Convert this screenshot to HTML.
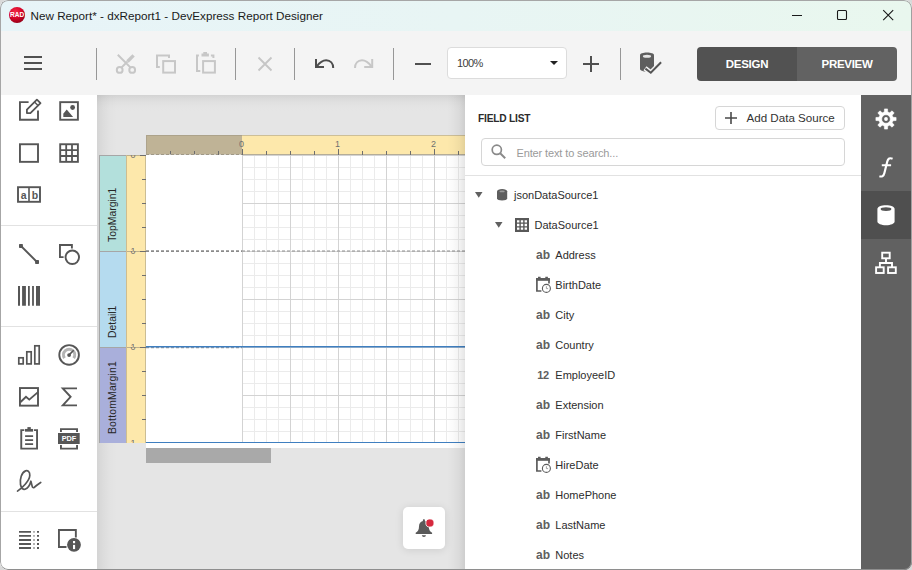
<!DOCTYPE html>
<html><head><meta charset="utf-8"><title>DevExpress Report Designer</title>
<style>
*{box-sizing:border-box;margin:0;padding:0}
html,body{width:912px;height:570px;overflow:hidden;background:#d9d9d9;font-family:"Liberation Sans",sans-serif;}
.abs{position:absolute}
#win{position:absolute;left:0;top:0;width:912px;height:570px;overflow:hidden;background:#f3f3f3;border-radius:8px 8px 8px 8px;}
#titlebar{position:absolute;left:0;top:0;width:912px;height:31px;background:linear-gradient(90deg,#e7f4f8 0%,#e8f5f4 50%,#e9f7ee 100%);}
#title{position:absolute;left:30.5px;top:8px;font-size:11.7px;line-height:16px;color:#1a1a1a;white-space:nowrap;}
#toolbar{position:absolute;left:0;top:31px;width:912px;height:64px;background:#f4f4f4;}
.vsep{position:absolute;top:48px;width:1px;height:32px;background:#979797;}
#toolbox{position:absolute;left:0;top:95px;width:97px;height:475px;background:#fff;}
.hsep{position:absolute;left:0;width:97px;height:1px;background:#e2e2e2;}
#surface{position:absolute;left:97px;top:95px;width:368px;height:475px;background:#e5e5e5;overflow:hidden;}
#panel{position:absolute;left:465px;top:95px;width:396px;height:475px;background:#fff;}
#strip{position:absolute;left:861px;top:95px;width:51px;height:475px;background:#616161;}
.row{position:absolute;font-size:11px;line-height:14px;color:#2d2d2d;white-space:nowrap;}
.ab{position:absolute;font-size:12px;line-height:14px;font-weight:bold;color:#606060;white-space:nowrap;letter-spacing:0}
svg{position:absolute;overflow:visible}
.rn{font-size:9px;line-height:12px;color:#707070;text-align:center}
.bl{height:28px;transform-origin:0 0;transform:rotate(-90deg);font-size:10.4px;line-height:27px;color:#262626;white-space:nowrap;letter-spacing:0}
</style></head><body>
<div id="win">
<div id="titlebar">
  <svg style="left:9px;top:7px" width="16" height="16" viewBox="0 0 16 16"><defs><radialGradient id="rg" cx="40%" cy="30%" r="75%"><stop offset="0" stop-color="#f22a48"/><stop offset="0.55" stop-color="#d60428"/><stop offset="1" stop-color="#8e0016"/></radialGradient></defs><circle cx="8" cy="8" r="8" fill="url(#rg)"/><text x="8.1" y="10.3" font-size="6.5" font-weight="bold" fill="#fff" text-anchor="middle" font-family="Liberation Sans, sans-serif">RAD</text></svg>
  <div id="title">New Report* - dxReport1 - DevExpress Report Designer</div>
  <svg style="left:786px;top:5px" width="120" height="20" viewBox="0 0 120 20" fill="none" stroke="#1a1a1a" stroke-width="1.1"><path d="M6 10.5h10"/><rect x="51.5" y="5.5" width="9" height="9" rx="1"/><path d="M97.2 5.2l10 10M107.2 5.2l-10 10"/></svg>
</div>
<div id="toolbar">
  <svg style="left:24px;top:25px" width="18" height="14" viewBox="0 0 18 14"><path d="M0 1.5h18M0 7.5h18M0 13.5h18" stroke="#505050" stroke-width="2" transform="translate(0,-0.5)"/></svg>
  <div class="vsep" style="left:96px;top:17px"></div>
  <!-- cut copy paste -->
  <svg style="left:0;top:0" width="240" height="64" viewBox="0 31 240 64" fill="none" stroke="#c7c7c7" stroke-width="2">
    <circle cx="119.7" cy="69.9" r="2.9"/><circle cx="132.2" cy="69.9" r="2.9"/>
    <path d="M117.8 54.8L130.6 67.6M121.4 67.6L127.5 61.5"/>
    <path d="M133.6 55.3L127.5 61.5" stroke-width="3.3"/>
    <path d="M159.8 66.9H157V55.4H169V57.9"/><rect x="163.2" y="61.1" width="11.8" height="11.5"/>
    <path d="M200.3 71.1H197V55.4H198.9M210.9 55.4H213.4V58.1"/><rect x="203.1" y="61.1" width="11.8" height="11.5"/>
    <path d="M201.5 53.6h7.4v2.8h-7.4zM203.3 51.9h3.7v2h-3.7z" fill="#c7c7c7" stroke="none"/>
  </svg>
  <div class="vsep" style="left:235px;top:17px"></div>
  <svg style="left:258px;top:26px" width="14" height="14" viewBox="0 0 14 14" fill="none" stroke="#c6c6c6" stroke-width="1.8"><path d="M0.5 0.5l13 13M13.5 0.5l-13 13"/></svg>
  <div class="vsep" style="left:294px;top:17px"></div>
  <!-- undo redo -->
  <svg style="left:0;top:0" width="1" height="1" viewBox="0 31 1 1" fill="none" stroke-width="2"><g stroke="#4e4e4e"><path d="M316 59V67H324"/><path d="M316.8 66.3C320 61.8 323 60.2 326.2 60.2C330.4 60.2 333.2 63.5 333.2 68"/></g><g stroke="#c7c7c7" transform="translate(688.2,0) scale(-1,1)"><path d="M316 59V67H324"/><path d="M316.8 66.3C320 61.8 323 60.2 326.2 60.2C330.4 60.2 333.2 63.5 333.2 68"/></g></svg>
  <div class="vsep" style="left:393px;top:17px"></div>
  <div class="abs" style="left:415px;top:31.5px;width:16px;height:2px;background:#505050"></div>
  <div class="abs" style="left:447px;top:16px;width:120px;height:32px;background:#fff;border:1px solid #dcdcdc;border-radius:4px"></div>
  <div class="abs" style="left:457px;top:25px;font-size:11px;line-height:14px;color:#404040;letter-spacing:-0.6px">100%</div>
  <svg style="left:549.5px;top:30px" width="8" height="4" viewBox="0 0 8 4"><path d="M0 0h8l-4 4z" fill="#222"/></svg>
  <svg style="left:583px;top:25px" width="16" height="16" viewBox="0 0 16 16" stroke="#505050" stroke-width="2"><path d="M0 8h16M8 0v16"/></svg>
  <div class="vsep" style="left:620px;top:17px"></div>
  <!-- validate datasource -->
  <svg style="left:0;top:0" width="1" height="1" viewBox="0 31 1 1"><path d="M640 55.2C640 53.7 643.1 52.6 647 52.6s7 1.1 7 2.6v13.8c0 1.5-3.1 2.6-7 2.6s-7-1.1-7-2.6z" fill="#5e5e5e"/><ellipse cx="647" cy="56.3" rx="4.1" ry="1.5" fill="#e6e6e6"/><path d="M645 68.3l5.8 4.4 10.4-10.5" fill="none" stroke="#f4f4f4" stroke-width="5"/><path d="M645.4 68.6l5.4 4.1 10.3-10.4" fill="none" stroke="#555" stroke-width="2"/></svg>
  <div class="abs" style="left:697px;top:16px;width:100px;height:34px;background:#525252;border-radius:4px 0 0 4px"></div>
  <div class="abs" style="left:797px;top:16px;width:100px;height:34px;background:#626262;border-radius:0 4px 4px 0"></div>
  <div class="abs" style="left:697px;top:26px;width:100px;text-align:center;font-size:11.5px;line-height:14px;font-weight:bold;color:#fff;letter-spacing:-0.3px">DESIGN</div>
  <div class="abs" style="left:797px;top:26px;width:100px;text-align:center;font-size:11.5px;line-height:14px;font-weight:bold;color:#fff;letter-spacing:-0.3px">PREVIEW</div>
</div>
<div id="toolbox">
<div class="hsep" style="top:130px"></div>
<div class="hsep" style="top:231px"></div>
<div class="hsep" style="top:416px"></div>
<svg style="left:0;top:0" width="97" height="475" viewBox="0 95 97 475" fill="none" stroke="#565656" stroke-width="1.9">
  <!-- label / edit -->
  <path d="M28.6 102.1H19.95V119.75H38V110.6"/>
  <path d="M26.9 113.1V109.6L36.9 99.6 40.5 103.2 30.4 113.1Z" stroke-width="1.8" stroke-linejoin="round"/>
  <path d="M34.5 102.1L38 105.6" stroke-width="1.4"/>
  <!-- picture -->
  <rect x="60.2" y="102.15" width="17.7" height="17.6"/>
  <path d="M63.3 116.9v-3.2l3.4-4.3 6.4 7.5z" fill="#565656" stroke="none"/>
  <circle cx="72.6" cy="107.5" r="2.4" fill="#565656" stroke="none"/>
  <!-- panel -->
  <rect x="19.95" y="144.25" width="18.05" height="17.6"/>
  <!-- table -->
  <rect x="60.2" y="144.25" width="17.7" height="17.6"/>
  <path d="M66.2 144v18M72 144v18M60 150.1h18M60 156h18" stroke-width="1.8"/>
  <!-- character comb -->
  <rect x="18" y="187.2" width="22" height="14.6"/>
  <path d="M29 187v15" stroke-width="1.6"/>
  <text x="23.6" y="198.6" font-size="10.5" font-weight="bold" fill="#565656" stroke="none" text-anchor="middle" font-family="Liberation Sans, sans-serif">a</text>
  <text x="34.9" y="198.6" font-size="10.5" font-weight="bold" fill="#565656" stroke="none" text-anchor="middle" font-family="Liberation Sans, sans-serif">b</text>
  <!-- line -->
  <path d="M21 246l16 16"/>
  <rect x="19" y="244" width="3.9" height="3.9" rx="0.7" fill="#565656" stroke="none"/>
  <rect x="35.1" y="260.1" width="3.9" height="3.9" rx="0.7" fill="#565656" stroke="none"/>
  <!-- shape -->
  <path d="M63.6 257.1H59.95V244.95H71.9V248.6"/>
  <circle cx="72.3" cy="257.3" r="6.75"/>
  <!-- barcode -->
  <path d="M18 286h2v19.8h-2zM22.1 286h3.8v19.8h-3.8zM28 286h1.8v19.8h-1.8zM32.1 286h1.8v19.8h-1.8zM36 286h4v19.8h-4z" fill="#565656" stroke="none"/>
  <!-- chart -->
  <rect x="18.8" y="357.8" width="4.4" height="6.1" stroke-width="1.7"/>
  <rect x="26.8" y="351.8" width="4.4" height="12.1" stroke-width="1.7"/>
  <rect x="34.8" y="345.8" width="4.4" height="18.1" stroke-width="1.7"/>
  <!-- gauge -->
  <circle cx="69.1" cy="354.9" r="9.8"/>
  <path d="M64.5 358.1A5.6 5.6 0 1 1 73.7 358.1" stroke="#b4b4b4" stroke-width="3"/>
  <path d="M69.1 354.9l4.6-4.6" stroke-width="1.6"/>
  <circle cx="69.1" cy="355.1" r="1.9" fill="#565656" stroke="none"/>
  <!-- sparkline -->
  <rect x="19.950" y="388.050" width="18.050" height="17.6"/>
  <path d="M20.3 402.3l5.7-5.6 3.3 2.9L37.7 392.4"/>
  <!-- sigma -->
  <path d="M77 388.4H62.8L70.6 396.8 62.8 405.4H77" stroke-width="1.9"/>
  <!-- clipboard -->
  <path d="M24.3 430.1H21.250V448.650H37.050V430.1H34"/>
  <path d="M25 430.3h8.1" stroke-width="2.7"/><path d="M27.4 428.1h3.4" stroke-width="2"/>
  <path d="M25.1 436.2h8M25.1 440.2h8M25.1 444.1h8" stroke-width="1.8"/>
  <!-- pdf -->
  <path d="M60.950 432V429.150H77.050V432M60.950 445V448.650H77.050V445"/>
  <rect x="58" y="433" width="21.7" height="11" fill="#565656" stroke="none"/>
  <text transform="translate(69,441) scale(1.16,1)" x="0" y="0" font-size="6.3" font-weight="bold" fill="#fff" stroke="none" text-anchor="middle" font-family="Liberation Sans, sans-serif">PDF</text>
  <!-- signature -->
  <path d="M17.5 491.1C22 488 29.5 481 29.8 475.5C30 471.5 27.5 470.2 25.6 470.9C21.6 472.3 19.6 479 20.5 484.5C21.1 488 23 489.8 25 489.2C27.5 488.3 29.9 485 30.9 481.2L32.2 486.4C32.5 487.7 33.4 487.9 34.4 487.2C36.5 485.6 38.5 483.6 40.7 482.4" stroke-width="1.7" stroke-linecap="round" stroke-linejoin="round"/>
  <!-- toc -->
  <path d="M19 531.9h12M19 535.9h12M19 540h12M19 544h12M19 548h12" stroke-width="1.8"/>
  <path d="M33 531.9h2M33 535.9h2M33 540h2M33 544h2M33 548h2" stroke="#b2b2b2" stroke-width="1.8"/>
  <path d="M37 531.9h2M37 535.9h2M37 540h2M37 544h2M37 548h2" stroke-width="1.8"/>
  <!-- page info -->
  <path d="M66.5 547H58.950V529.950H75.850V537.5"/>
  <circle cx="74" cy="544.8" r="6.9" fill="#565656" stroke="none"/>
  <rect x="73" y="544.9" width="2.1" height="4.2" fill="#fff" stroke="none"/>
  <rect x="73" y="541" width="2.1" height="2.2" fill="#fff" stroke="none"/>
</svg>
</div>
<div id="surface">
<div class="abs" style="left:0;top:0;width:368px;height:16px;background:linear-gradient(180deg,#d3d3d3 0,#dadada 20%,#e0e0e0 45%,#e4e4e4 75%,#e5e5e5 100%)"></div>
<div class="abs" style="left:0;top:0;width:20px;height:475px;background:linear-gradient(90deg,rgba(0,0,0,0.075) 0,rgba(0,0,0,0.04) 30%,rgba(0,0,0,0.012) 65%,rgba(0,0,0,0) 100%)"></div>
<div class="abs" style="left:49px;top:60px;width:319px;height:293px;background:#fff"></div>
<div class="abs" style="left:145px;top:60px;width:223px;height:288px;background-image:linear-gradient(90deg,#d3d3d3 1px,transparent 1px),linear-gradient(180deg,#d3d3d3 1px,transparent 1px),linear-gradient(90deg,#ebebeb 1px,transparent 1px),linear-gradient(180deg,#ebebeb 1px,transparent 1px);background-size:48px 48px,48px 48px,12px 12px,12px 12px;"></div>
<div class="abs" style="left:49px;top:40px;width:319px;height:20px;background:#fde8ab;border-top:1px solid #cdbf97;border-bottom:1px solid #b5ad98"></div>
<div class="abs" style="left:49px;top:40px;width:96px;height:20px;background:#bfb396;border-top:1px solid #aca28a;border-bottom:1px solid #a09885;border-left:1px solid #ada38c"></div>
<div class="abs" style="left:73px;top:56px;width:1px;height:4px;background:#6e6e6e"></div><div class="abs" style="left:97px;top:56px;width:1px;height:4px;background:#6e6e6e"></div><div class="abs" style="left:121px;top:56px;width:1px;height:4px;background:#6e6e6e"></div><div class="abs" style="left:145px;top:54px;width:1px;height:6px;background:#6e6e6e"></div><div class="abs" style="left:169px;top:56px;width:1px;height:4px;background:#6e6e6e"></div><div class="abs" style="left:193px;top:56px;width:1px;height:4px;background:#6e6e6e"></div><div class="abs" style="left:217px;top:56px;width:1px;height:4px;background:#6e6e6e"></div><div class="abs" style="left:241px;top:54px;width:1px;height:6px;background:#6e6e6e"></div><div class="abs" style="left:265px;top:56px;width:1px;height:4px;background:#6e6e6e"></div><div class="abs" style="left:289px;top:56px;width:1px;height:4px;background:#6e6e6e"></div><div class="abs" style="left:313px;top:56px;width:1px;height:4px;background:#6e6e6e"></div><div class="abs" style="left:337px;top:54px;width:1px;height:6px;background:#6e6e6e"></div><div class="abs" style="left:361px;top:56px;width:1px;height:4px;background:#6e6e6e"></div>
<div class="abs rn" style="left:134.5px;top:43.4px;width:20px">0</div>
<div class="abs rn" style="left:230.5px;top:43.4px;width:20px">1</div>
<div class="abs rn" style="left:326.5px;top:43.4px;width:20px">2</div>
<div class="abs" style="left:2px;top:60px;width:28px;height:96px;background:#b3e0dc;border-left:1px solid #a6a6a6;border-top:1px solid #a6a6a6"></div>
<div class="abs bl" style="left:2px;top:147px;width:96px">TopMargin1</div>
<div class="abs" style="left:29px;top:60px;width:20px;height:96px;background:#fde8ab;border-left:1px solid #cdbd90;overflow:hidden"><div class="abs" style="left:18px;top:0;width:1px;height:100%;background:#cbbd94"></div><div class="abs" style="left:0;top:0;width:19px;height:1px;background:#bdb08c"></div><div class="abs rn" style="left:-4px;top:-6px;width:20px">0</div><div class="abs rn" style="left:-4px;top:90px;width:20px">1</div><div class="abs" style="left:13px;top:0px;width:6px;height:1px;background:#6e6e6e"></div><div class="abs" style="left:15px;top:24px;width:4px;height:1px;background:#6e6e6e"></div><div class="abs" style="left:15px;top:48px;width:4px;height:1px;background:#6e6e6e"></div><div class="abs" style="left:15px;top:72px;width:4px;height:1px;background:#6e6e6e"></div><div class="abs" style="left:13px;top:96px;width:6px;height:1px;background:#6e6e6e"></div></div>
<div class="abs" style="left:2px;top:156px;width:28px;height:96px;background:#b5dbef;border-left:1px solid #a6a6a6;border-top:1px solid #a6a6a6"></div>
<div class="abs bl" style="left:2px;top:243px;width:96px">Detail1</div>
<div class="abs" style="left:29px;top:156px;width:20px;height:96px;background:#fde8ab;border-left:1px solid #cdbd90;overflow:hidden"><div class="abs" style="left:18px;top:0;width:1px;height:100%;background:#cbbd94"></div><div class="abs" style="left:0;top:0;width:19px;height:1px;background:#bdb08c"></div><div class="abs rn" style="left:-4px;top:-6px;width:20px">0</div><div class="abs rn" style="left:-4px;top:90px;width:20px">1</div><div class="abs" style="left:13px;top:0px;width:6px;height:1px;background:#6e6e6e"></div><div class="abs" style="left:15px;top:24px;width:4px;height:1px;background:#6e6e6e"></div><div class="abs" style="left:15px;top:48px;width:4px;height:1px;background:#6e6e6e"></div><div class="abs" style="left:15px;top:72px;width:4px;height:1px;background:#6e6e6e"></div><div class="abs" style="left:13px;top:96px;width:6px;height:1px;background:#6e6e6e"></div></div>
<div class="abs" style="left:2px;top:252px;width:28px;height:96px;background:#a9afdb;border-left:1px solid #a6a6a6;border-top:1px solid #a6a6a6"></div>
<div class="abs bl" style="left:2px;top:339px;width:96px;letter-spacing:0.19px">BottomMargin1</div>
<div class="abs" style="left:29px;top:252px;width:20px;height:96px;background:#fde8ab;border-left:1px solid #cdbd90;overflow:hidden"><div class="abs" style="left:18px;top:0;width:1px;height:100%;background:#cbbd94"></div><div class="abs" style="left:0;top:0;width:19px;height:1px;background:#bdb08c"></div><div class="abs rn" style="left:-4px;top:-6px;width:20px">0</div><div class="abs rn" style="left:-4px;top:90px;width:20px">1</div><div class="abs" style="left:13px;top:0px;width:6px;height:1px;background:#6e6e6e"></div><div class="abs" style="left:15px;top:24px;width:4px;height:1px;background:#6e6e6e"></div><div class="abs" style="left:15px;top:48px;width:4px;height:1px;background:#6e6e6e"></div><div class="abs" style="left:15px;top:72px;width:4px;height:1px;background:#6e6e6e"></div><div class="abs" style="left:13px;top:96px;width:6px;height:1px;background:#6e6e6e"></div></div>
<div class="abs" style="left:43px;top:60px;width:6px;height:1px;background:#6e6e6e"></div>
<svg style="left:49px;top:59px" width="96" height="3"><path d="M0 1.3H96" stroke="#fff" stroke-width="1.4" stroke-dasharray="2 3" stroke-dashoffset="-3"/></svg>
<svg style="left:49px;top:155px" width="319" height="3"><path d="M0 1.2H96" stroke="#8a8a8a" stroke-width="1.8" stroke-dasharray="3 2"/><path d="M96 1H319" stroke="#8c8c8c" stroke-width="1" stroke-dasharray="3 2"/></svg>
<svg style="left:49px;top:250px" width="319" height="4"><path d="M0 2.7H96" stroke="#9a9a9a" stroke-width="1.2" stroke-dasharray="3 2"/><path d="M0 1.7H319" stroke="#3f7fc0" stroke-width="1.4"/></svg>
<div class="abs" style="left:49px;top:346.8px;width:319px;height:1.4px;background:#3f7fc0"></div>
<div class="abs" style="left:49px;top:353px;width:125px;height:15px;background:#a9a9a9"></div>
<div class="abs" style="left:306px;top:412px;width:42px;height:42px;background:#fff;border-radius:5px;box-shadow:0 1px 9px rgba(0,0,0,0.11)"></div>
<svg style="left:318px;top:423px" width="20" height="20" viewBox="0 0 20 20"><path d="M8.9 1.2c0.7 0 1 0.4 1 1v0.9c2.6 0.6 3.9 2.7 3.9 5.4 0 3.5 1.2 4.8 3.3 6.3v1.2H0.7v-1.2C2.8 13.3 4 12 4 8.5c0-2.7 1.3-4.8 3.9-5.4V2.2c0-0.6 0.3-1 1-1z" fill="#5a5a5a"/><path d="M6.9 17.3h4c0 1.1-0.9 1.7-2 1.7s-2-0.6-2-1.7z" fill="#5a5a5a"/><circle cx="14.9" cy="5" r="4.1" fill="#d6293e" stroke="#fff" stroke-width="0.8"/></svg>
<div class="abs" style="left:350px;top:0;width:18px;height:475px;background:linear-gradient(90deg,rgba(0,0,0,0) 0,rgba(0,0,0,0.02) 35%,rgba(0,0,0,0.05) 70%,rgba(0,0,0,0.10) 100%)"></div>
</div>
<div id="panel">
<div class="abs" style="left:13px;top:16.6px;font-size:10.2px;line-height:14px;font-weight:bold;color:#2b2b2b;letter-spacing:-0.2px;white-space:nowrap">FIELD LIST</div>
<div class="abs" style="left:250px;top:11px;width:130px;height:24px;border:1px solid #d6d6d6;border-radius:4px;background:#fff"></div>
<svg style="left:260px;top:17px" width="12" height="12" viewBox="0 0 12 12" stroke="#4a4a4a" stroke-width="1.6"><path d="M0 6h12M6 0v12"/></svg>
<div class="abs" style="left:281.5px;top:15px;font-size:11.6px;line-height:16px;color:#333;white-space:nowrap">Add Data Source</div>
<div class="abs" style="left:16px;top:43px;width:364px;height:28px;border:1px solid #d6d6d6;border-radius:4px;background:#fff"></div>
<svg style="left:26px;top:49px" width="16" height="16" viewBox="0 0 16 16" fill="none" stroke="#8a8a8a" stroke-width="1.7"><circle cx="5.8" cy="5.8" r="4.6"/><path d="M9.2 9.2l5 5" stroke-width="2"/></svg>
<div class="abs" style="left:51.5px;top:50px;font-size:11px;line-height:16px;color:#9a9a9a;letter-spacing:-0.13px;white-space:nowrap">Enter text to search...</div>
<div class="abs" style="left:0;top:80px;width:396px;height:1px;background:#e2e2e2"></div>
<svg style="left:9.8px;top:97px" width="8" height="6" viewBox="0 0 8 6"><path d="M0 0h7.5L3.75 5.7z" fill="#606060"/></svg>
<svg style="left:32px;top:94.3px" width="10.2" height="11.5" viewBox="0 0 10.2 11.5"><path d="M0 2.3C0 1 2.3 0 5.1 0s5.1 1 5.1 2.3v6.9c0 1.3-2.3 2.3-5.1 2.3S0 10.5 0 9.2z" fill="#5e5e5e"/><ellipse cx="5.1" cy="2.4" rx="2.7" ry="0.9" fill="#9a9a9a"/></svg>
<div class="row" style="left:49px;top:93px">jsonDataSource1</div>
<svg style="left:29.8px;top:127px" width="8" height="6" viewBox="0 0 8 6"><path d="M0 0h7.5L3.75 5.7z" fill="#606060"/></svg>
<svg style="left:50px;top:123px" width="14" height="14" viewBox="0 0 14 14"><path d="M0 0h14v14H0z M2 2.2v2.4h2.4V2.2z M5.8 2.2v2.4h2.4V2.2z M9.6 2.2v2.4h2.4V2.2z M2 5.8v2.4h2.4V5.8z M5.8 5.8v2.4h2.4V5.8z M9.6 5.8v2.4h2.4V5.8z M2 9.4v2.4h2.4V9.4z M5.8 9.4v2.4h2.4V9.4z M9.6 9.4v2.4h2.4V9.4z" fill="#585858" fill-rule="evenodd"/></svg>
<div class="row" style="left:69.5px;top:123px">DataSource1</div>
<div class="ab" style="left:70.5px;top:153px;width:15px;text-align:center">ab</div>
<div class="row" style="left:90.29999999999995px;top:153px">Address</div>
<svg style="left:71px;top:182px" width="16" height="16" viewBox="0 0 16 16"><path d="M5.4 14H0.9V2.5h12.1V6.4" fill="none" stroke="#5c5c5c" stroke-width="1.7"/><path d="M0 0.9h13.9v2.9H0z M2 -0.2h2.6v1.2h-2.6z M9.3 -0.2h2.6v1.2h-2.6z" fill="#5c5c5c"/><circle cx="10.4" cy="11.4" r="4" fill="#fff" stroke="#5c5c5c" stroke-width="1.1"/><path d="M10.4 9.2v2.4h1.7" fill="none" stroke="#9a9a9a" stroke-width="0.9"/></svg>
<div class="row" style="left:90.29999999999995px;top:183px">BirthDate</div>
<div class="ab" style="left:70.5px;top:213px;width:15px;text-align:center">ab</div>
<div class="row" style="left:90.29999999999995px;top:213px">City</div>
<div class="ab" style="left:70.5px;top:243px;width:15px;text-align:center">ab</div>
<div class="row" style="left:90.29999999999995px;top:243px">Country</div>
<div class="ab" style="left:70.5px;top:273px;width:15px;text-align:center;font-size:11px;letter-spacing:-0.3px">12</div>
<div class="row" style="left:90.29999999999995px;top:273px">EmployeeID</div>
<div class="ab" style="left:70.5px;top:303px;width:15px;text-align:center">ab</div>
<div class="row" style="left:90.29999999999995px;top:303px">Extension</div>
<div class="ab" style="left:70.5px;top:333px;width:15px;text-align:center">ab</div>
<div class="row" style="left:90.29999999999995px;top:333px">FirstName</div>
<svg style="left:71px;top:362px" width="16" height="16" viewBox="0 0 16 16"><path d="M5.4 14H0.9V2.5h12.1V6.4" fill="none" stroke="#5c5c5c" stroke-width="1.7"/><path d="M0 0.9h13.9v2.9H0z M2 -0.2h2.6v1.2h-2.6z M9.3 -0.2h2.6v1.2h-2.6z" fill="#5c5c5c"/><circle cx="10.4" cy="11.4" r="4" fill="#fff" stroke="#5c5c5c" stroke-width="1.1"/><path d="M10.4 9.2v2.4h1.7" fill="none" stroke="#9a9a9a" stroke-width="0.9"/></svg>
<div class="row" style="left:90.29999999999995px;top:363px">HireDate</div>
<div class="ab" style="left:70.5px;top:393px;width:15px;text-align:center">ab</div>
<div class="row" style="left:90.29999999999995px;top:393px">HomePhone</div>
<div class="ab" style="left:70.5px;top:423px;width:15px;text-align:center">ab</div>
<div class="row" style="left:90.29999999999995px;top:423px">LastName</div>
<div class="ab" style="left:70.5px;top:453px;width:15px;text-align:center">ab</div>
<div class="row" style="left:90.29999999999995px;top:453px">Notes</div>
</div>
<div id="strip">
<div class="abs" style="left:0;top:96px;width:51px;height:48px;background:#4f4f4f"></div>
<svg style="left:0;top:0" width="51" height="475" viewBox="861 95 51 475" fill="none" stroke="#fff" stroke-width="1.9">
  <path d="M884.32 112.00 L884.48 108.91 L887.52 108.91 L887.68 112.00 L889.76 112.86 L892.06 110.80 L894.20 112.94 L892.14 115.24 L893.00 117.32 L896.09 117.48 L896.09 120.52 L893.00 120.68 L892.14 122.76 L894.20 125.06 L892.06 127.20 L889.76 125.14 L887.68 126.00 L887.52 129.09 L884.48 129.09 L884.32 126.00 L882.24 125.14 L879.94 127.20 L877.80 125.06 L879.86 122.76 L879.00 120.68 L875.91 120.52 L875.91 117.48 L879.00 117.32 L879.86 115.24 L877.80 112.94 L879.94 110.80 L882.24 112.86z M886 114.7a4.3 4.3 0 1 0 0 8.6 4.3 4.3 0 1 0 0-8.6z" fill="#fff" fill-rule="evenodd" stroke="#fff" stroke-width="0.6" stroke-linejoin="round"/>
  <circle cx="886" cy="119" r="1.9" fill="#fff" stroke="none"/>
  <path d="M892.6 158.7C889.8 157.6 888 158.4 887.2 161.8L884.4 173C883.6 176.3 882 177 879.4 176.2" stroke-width="2.2"/>
  <path d="M881.8 165.2h9.3" stroke-width="2.1"/>
  <path d="M877.4 209C877.4 206.9 881.2 205.3 886 205.3s8.6 1.6 8.6 3.7v12.5c0 2.1-3.8 3.7-8.6 3.7s-8.6-1.6-8.6-3.7z" fill="#fff" stroke="none"/>
  <ellipse cx="886" cy="209.1" rx="5.4" ry="1.9" fill="#555" stroke="none"/>
  <rect x="882.2" y="252.7" width="7.5" height="5.6"/>
  <rect x="876.1" y="267.3" width="7.6" height="5.7"/>
  <rect x="888.1" y="267.3" width="7.7" height="5.7"/>
  <path d="M886 259v4M879.9 267V263h12.1v4"/>
</svg>
</div>
<div class="abs" style="left:0;top:0;width:912px;height:570px;border:1px solid #a6a6a6;border-bottom-color:#8e8e8e;border-right-color:#a0a0a0;border-radius:8px"></div>
</div>
</body></html>
